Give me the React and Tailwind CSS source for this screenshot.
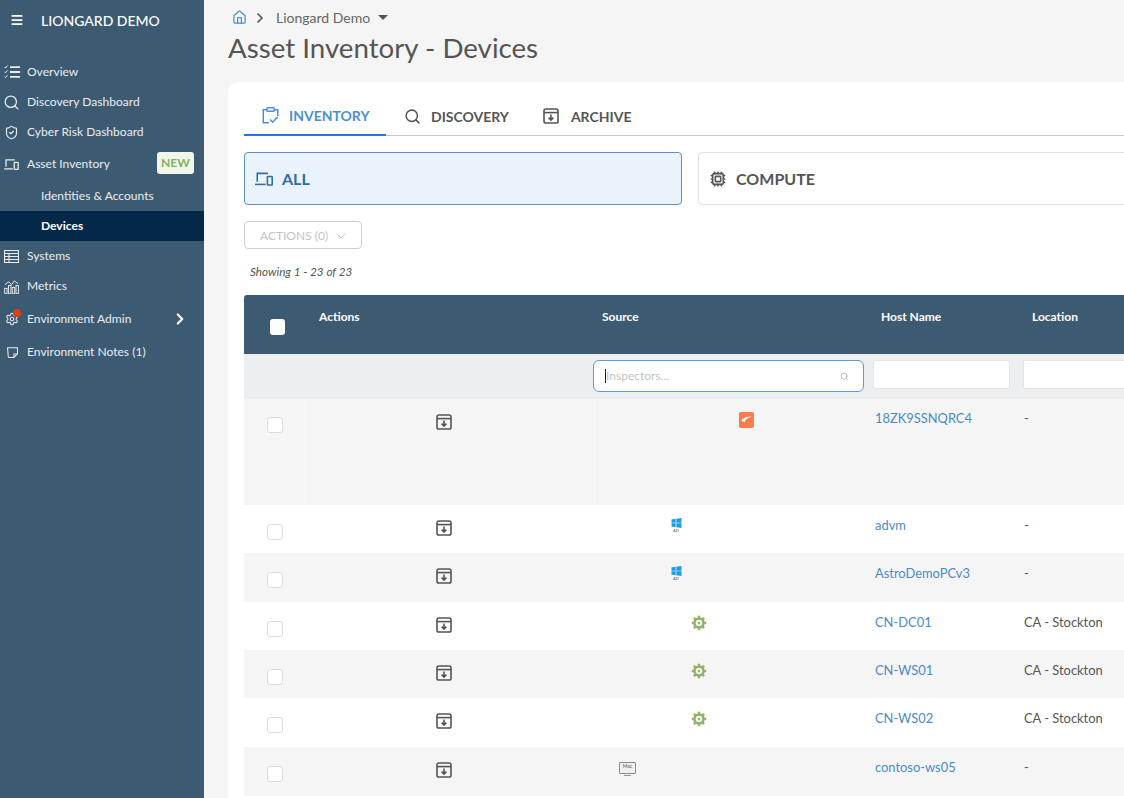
import { Search, ChevronRight, ChevronDown, Menu, ShieldCheck, Settings, Home, Cpu } from "lucide-react";

function DevicesIcon({ className }) {
  return (
    <svg viewBox="0 0 16 12" fill="none" stroke="currentColor" strokeWidth="1.4" className={className}>
      <path d="M2 8.5V1h9.5" />
      <path d="M0 10.8H9.5" />
      <rect x="11" y="3.7" width="4.3" height="7.6" rx="0.5" />
    </svg>
  );
}

function OverviewIcon() {
  return (
    <svg viewBox="0 0 16 14" fill="none" stroke="currentColor" className="w-[16px] h-[14px]">
      <path d="M6 2.2h10M6 7h10M6 11.8h10" strokeWidth="1.8" />
      <path d="M0.5 2l1 1 2-2.4M0.5 6.8l1 1 2-2.4M0.5 11.6l1 1 2-2.4" strokeWidth="1" />
    </svg>
  );
}

function TableIcon() {
  return (
    <svg viewBox="0 0 15 13" fill="none" stroke="currentColor" strokeWidth="1.1" className="w-[15px] h-[13px]">
      <rect x="0.5" y="0.5" width="14" height="12" />
      <path d="M0.5 3.5h14M0.5 6.5h14M0.5 9.5h14M5 3.5v9" />
    </svg>
  );
}

function MetricsIcon() {
  return (
    <svg viewBox="0 0 16 16" fill="none" stroke="currentColor" strokeWidth="1" className="w-[15px] h-[15px] text-[#e8edf1]">
      <path d="M1 6l4-3 3 3 3-4 4 3" />
      <rect x="0.7" y="10" width="2.6" height="5.3" />
      <rect x="4.8" y="7" width="2.6" height="8.3" />
      <rect x="8.8" y="9" width="2.6" height="6.3" />
      <rect x="12.8" y="7" width="2.6" height="8.3" />
    </svg>
  );
}

function NoteIcon() {
  return (
    <svg viewBox="0 0 12 12" fill="none" stroke="currentColor" strokeWidth="1.1" className="w-[11px] h-[11px]">
      <path d="M0.6 0.8H11.4V7.5L7.5 11.4H2.2L1.4 10.6z" />
      <path d="M11.2 7.6H7.6v3.6" />
    </svg>
  );
}

function ClipboardIcon() {
  return (
    <svg viewBox="0 0 16 16" fill="none" stroke="currentColor" strokeWidth="1.4" className="w-[17px] h-[17px]">
      <path d="M4.5 2.5H1.2v12.3h5.3" />
      <path d="M11.5 2.5h3.3v6" />
      <rect x="4.6" y="0.8" width="6.8" height="3.2" rx="0.8" />
      <path d="M7.6 11.8l2.4 2.5 4.8-5" />
    </svg>
  );
}

function ArchiveIcon({ className }) {
  return (
    <svg viewBox="0 0 16 16" fill="none" stroke="currentColor" strokeWidth="1.6" className={className}>
      <rect x="1" y="1" width="14" height="14" rx="1.8" />
      <path d="M1 4.6h14" />
      <path d="M8 6.5v5.5M5.6 9.6L8 12l2.4-2.4" />
    </svg>
  );
}

function WindowsAd() {
  return (
    <div className="flex flex-col items-center w-[12px]">
      <svg viewBox="0 0 12 12" className="w-[11px] h-[10px] text-[#1e9be8]" fill="currentColor">
        <path d="M0 1.8L5 1v4.6H0zM5.8 0.9L12 0v5.6H5.8zM0 6.4h5V11l-5-.8zM5.8 6.4H12V12l-6.2-.9z" />
      </svg>
      <span className="text-[4px] leading-[5px] text-[#555]">AD</span>
    </div>
  );
}

function GearGreen() {
  return (
    <svg viewBox="0 0 16 16" fill="none" stroke="#8db164" className="w-[16px] h-[16px]">
      <circle cx="8" cy="8" r="4.5" strokeWidth="2.4" />
      <circle cx="8" cy="8" r="1.2" fill="#8db164" stroke="none" />
      <path d="M8 0.8v2M8 13.2v2M0.8 8h2M13.2 8h2M2.9 2.9l1.4 1.4M11.7 11.7l1.4 1.4M13.1 2.9l-1.4 1.4M4.3 11.7l-1.4 1.4" strokeWidth="2.4" />
    </svg>
  );
}

function MacIcon() {
  return (
    <div className="relative mt-[2px] w-[17px] h-[12px] bg-[#f0f0f0] border border-[#8a8a8a] rounded-[1px] flex items-start justify-center">
      <span className="text-[5px] leading-[7px] text-[#555]">Mac</span>
      <div className="absolute left-[4px] -bottom-[3px] w-[7px] h-[1px] bg-[#999]" />
    </div>
  );
}

function OrangeLogo() {
  return (
    <div className="w-[15px] h-[16px] rounded-[2px] bg-[#f97c4b] flex items-center justify-center">
      <svg viewBox="0 0 12 12" className="w-[13px] h-[13px]" fill="#fff">
        <path d="M1 6.8C2.6 3.4 6 2.4 11 2.6 7.6 3.4 5.2 4.6 3.8 7.8 3.3 7 2.4 6.6 1 6.8z" />
      </svg>
    </div>
  );
}

const nav = [
  { label: "Overview", icon: <OverviewIcon /> },
  { label: "Discovery Dashboard", icon: <Search size={17} strokeWidth={1.8} /> },
  { label: "Cyber Risk Dashboard", icon: <ShieldCheck size={15} strokeWidth={1.8} /> },
];

const rows = [
  { host: "18ZK9SSNQRC4", loc: "-", h: "h-[106px]", pos: "pl-[145px]", src: <OrangeLogo />, alt: true, tall: true },
  { host: "advm", loc: "-", h: "h-[48px]", pos: "pl-[76px]", src: <WindowsAd /> },
  { host: "AstroDemoPCv3", loc: "-", h: "h-[49px]", pos: "pl-[76px]", src: <WindowsAd />, alt: true },
  { host: "CN-DC01", loc: "CA - Stockton", h: "h-[48px]", pos: "pl-[97px]", src: <GearGreen /> },
  { host: "CN-WS01", loc: "CA - Stockton", h: "h-[48px]", pos: "pl-[97px]", src: <GearGreen />, alt: true },
  { host: "CN-WS02", loc: "CA - Stockton", h: "h-[49px]", pos: "pl-[97px]", src: <GearGreen /> },
  { host: "contoso-ws05", loc: "-", h: "h-[49px]", pos: "pl-[25px]", src: <MacIcon />, alt: true },
];

export default function App() {
  return (
    <div className="flex w-[1124px] h-[798px] overflow-hidden bg-[#f5f5f5] text-[#4d4d4d] font-['Lato',sans-serif]">
      {/* Sidebar */}
      <aside className="w-[204px] shrink-0 bg-[#3d5a73] text-[#e8edf1] text-[12.05px]">
        <div className="flex items-center h-[40px] pl-[10px]">
          <Menu size={14} strokeWidth={3} className="text-white" />
          <span className="ml-[17px] text-[14px] font-medium text-white">LIONGARD DEMO</span>
        </div>
        <nav className="mt-[17px]">
          {nav.map((n) => (
            <div key={n.label} className="flex items-center pl-[3px] h-[30px]">
              <span className="w-[17px] flex justify-center">{n.icon}</span>
              <span className="ml-[7px]">{n.label}</span>
            </div>
          ))}
          <div className="flex items-center pl-[4px] pr-[10px] h-[32px] pt-[2px]">
            <DevicesIcon className="w-[15px] h-[11px]" />
            <span className="ml-[8px]">Asset Inventory</span>
            <span className="ml-auto w-[37px] h-[22px] -mt-[2px] rounded-[3px] bg-[#f0f7ea] text-[#83b35c] font-bold text-[12px] flex items-center justify-center">NEW</span>
          </div>
          <div className="flex items-center pl-[41px] h-[30px] mt-[2px]">Identities &amp; Accounts</div>
          <div className="flex items-center pl-[41px] h-[30px] bg-[#042848] text-white font-bold">Devices</div>
          <div className="flex items-center pl-[4px] h-[30px]">
            <TableIcon />
            <span className="ml-[8px]">Systems</span>
          </div>
          <div className="flex items-center pl-[4px] h-[30px]">
            <MetricsIcon />
            <span className="ml-[8px]">Metrics</span>
          </div>
          <div className="flex items-center pl-[5px] h-[36px]">
            <span className="relative">
              <Settings size={14} strokeWidth={1.8} />
              <span className="absolute -top-[3px] left-[8px] w-[8px] h-[8px] rounded-full bg-[#d9401a]" />
            </span>
            <span className="ml-[8px]">Environment Admin</span>
            <ChevronRight size={18} strokeWidth={3} className="ml-[40px] text-white" />
          </div>
          <div className="flex items-center pl-[7px] h-[30px]">
            <NoteIcon />
            <span className="ml-[9px]">Environment Notes (1)</span>
          </div>
        </nav>
      </aside>

      {/* Main */}
      <main className="flex-1 min-w-0 pl-[24px]">
        <div className="flex items-center h-[35px] pl-[4px] text-[14px]">
          <Home size={15} strokeWidth={2} className="text-[#4a90d9]" />
          <ChevronRight size={16} strokeWidth={2.6} className="ml-[5px] text-[#555]" />
          <span className="ml-[8px] text-[#666]">Liongard Demo</span>
          <span className="ml-[8px] w-0 h-0 border-x-[5px] border-x-transparent border-t-[5px] border-t-[#555]" />
        </div>
        <h1 className="text-[27.7px] leading-[28px] text-[#555] -mt-[1px]">Asset Inventory - Devices</h1>

        <section className="mt-[20px] w-[920px] h-[760px] bg-white rounded-l-[10px] pl-[16px] pt-[16px]">
          {/* Tabs */}
          <div className="flex h-[38px] border-b border-[#c8c8c8] font-bold text-[14px]">
            <div className="flex items-center w-[142px] h-[38px] pl-[18px] pb-[2px] border-b-2 border-[#1f78e0] text-[#4a90d9]">
              <ClipboardIcon />
              <span className="ml-[10px]">INVENTORY</span>
            </div>
            <div className="flex items-center h-[36px] ml-[18px] text-[#555]">
              <Search size={17} strokeWidth={2.2} />
              <span className="ml-[10px]">DISCOVERY</span>
            </div>
            <div className="flex items-center h-[36px] ml-[34px] text-[#555]">
              <ArchiveIcon className="w-[16px] h-[16px]" />
              <span className="ml-[12px]">ARCHIVE</span>
            </div>
          </div>

          {/* Type cards */}
          <div className="flex gap-[16px] mt-[16px]">
            <div className="flex items-center w-[438px] h-[53px] shrink-0 pl-[10px] rounded-[4px] border border-[#5b91c9] bg-[#eaf3fc] text-[#2f6ca8] font-bold text-[16px]">
              <DevicesIcon className="w-[18px] h-[14px]" />
              <span className="ml-[9px]">ALL</span>
            </div>
            <div className="flex items-center flex-1 h-[53px] pl-[11px] rounded-[4px] border border-[#e2e2e2] text-[#555] font-bold text-[16px]">
              <Cpu size={16} strokeWidth={2.4} />
              <span className="ml-[10px]">COMPUTE</span>
            </div>
          </div>

          <button className="flex items-center mt-[16px] w-[118px] h-[28px] pl-[15px] pt-[1px] rounded-[4px] border border-[#cfcfcf] text-[#c2c2c2] text-[12px]">
            ACTIONS (0)
            <ChevronDown size={16} strokeWidth={1.2} className="ml-[5px]" />
          </button>

          <div className="mt-[14px] pl-[6px] text-[11.7px] leading-[16px] italic text-[#555]">Showing 1 - 23 of 23</div>

          {/* Table */}
          <div className="mt-[16px] text-[12.9px]">
            <div className="grid grid-cols-[60px_290px_273px_150px_1fr] h-[59px] bg-[#3d5a73] rounded-t-[3px] text-white text-[12px] font-bold">
              <div className="pl-[26px] pt-[24px]">
                <div className="w-[15px] h-[16px] rounded-[3px] bg-white" />
              </div>
              <div className="pl-[15px] pt-[13px]">Actions</div>
              <div className="pl-[8px] pt-[13px]">Source</div>
              <div className="pl-[14px] pt-[13px]">Host Name</div>
              <div className="pl-[15px] pt-[13px]">Location</div>
            </div>
            <div className="grid grid-cols-[60px_290px_273px_150px_1fr] h-[45px] bg-[#eceef0]">
              <div />
              <div />
              <div className="relative">
                <div className="absolute left-[-1px] top-[6px] w-[271px] h-[32px] bg-white rounded-[6px] border border-[#5b9bdc] flex items-center pl-[11px] text-[12px] text-[#c4c4c4]">
                  <span className="w-[1px] h-[14px] bg-[#222]" />
                  Inspectors...
                  <Search size={9} className="ml-auto mr-[14px] text-[#aaa]" />
                </div>
              </div>
              <div className="pt-[6px] pl-[6px]">
                <div className="w-[137px] h-[29px] bg-white rounded-[2px] border border-[#e6e6e6]" />
              </div>
              <div className="pt-[6px] pl-[6px]">
                <div className="w-[110px] h-[29px] bg-white rounded-l-[2px] border border-[#e6e6e6]" />
              </div>
            </div>
            {rows.map((r) => (
              <div key={r.host} className={`grid grid-cols-[60px_290px_273px_150px_1fr] ${r.h} ${r.alt ? "bg-[#f5f5f5]" : "bg-white"}`}>
                <div className={`pl-[23px] ${r.tall ? "pt-[18px]" : "pt-[19px]"}`}>
                  <div className="w-[16px] h-[16px] rounded-[3px] bg-white border border-[#dcdcdc]" />
                </div>
                <div className={`pl-[132px] pt-[15px] ${r.tall ? "shadow-[inset_1px_0_0_#f8f8f8]" : ""}`}>
                  <ArchiveIcon className="w-[16px] h-[16px] text-[#555]" />
                </div>
                <div className={`pt-[13px] ${r.pos} ${r.tall ? "shadow-[inset_1px_0_0_#f9f9f9]" : ""}`}>{r.src}</div>
                <div className={`pl-[8px] text-[#4a8ac9] ${r.tall ? "pt-[10px]" : "pt-[11px]"}`}>{r.host}</div>
                <div className={`pl-[7px] text-[#555] ${r.tall ? "pt-[10px]" : "pt-[11px]"}`}>{r.loc}</div>
              </div>
            ))}
          </div>
        </section>
      </main>
    </div>
  );
}
